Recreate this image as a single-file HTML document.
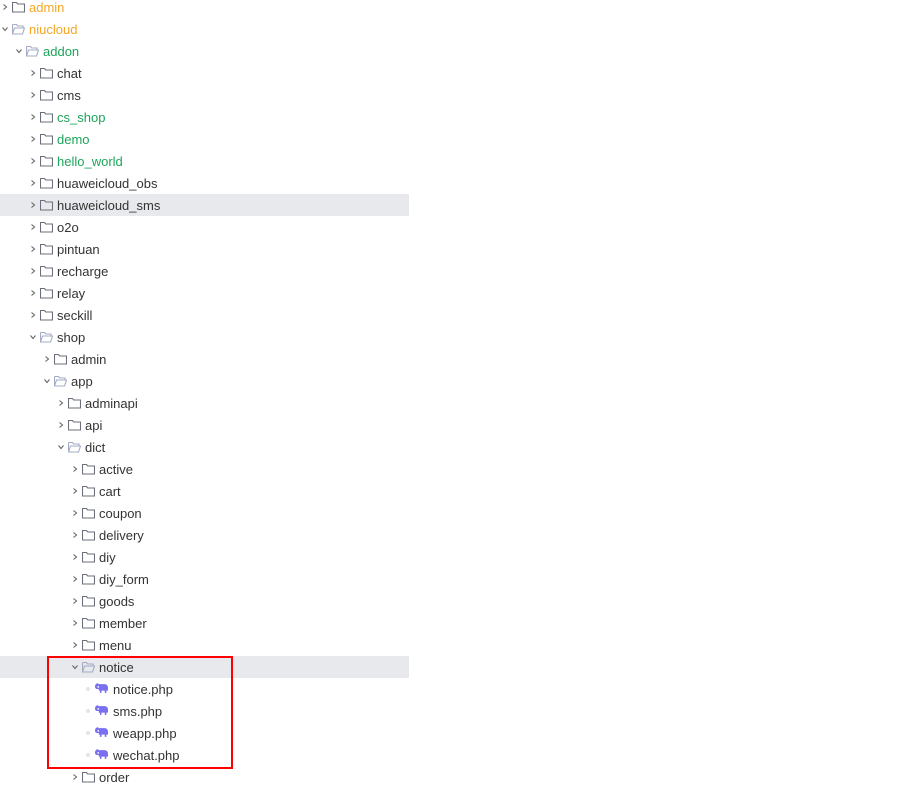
<!DOCTYPE html>
<html><head><meta charset="utf-8"><style>
body{margin:0;width:899px;height:789px;background:#fff;position:relative;overflow:hidden;font-family:"Liberation Sans",sans-serif;font-size:13px;color:#333}
.r{position:absolute;left:0;height:22px;width:409px}
.hl{background:#e8e9ec}
.c{position:absolute;top:0;height:22px;line-height:22px;left:calc(var(--l)*14px + 1px);width:8px;text-align:center}
.c svg{position:absolute;left:0;top:7px}
.f{position:absolute;top:5px;left:calc(var(--l)*14px + 12px)}
.t{position:absolute;top:1px;line-height:22px;left:calc(var(--l)*14px + 29px);white-space:nowrap}
.o{color:#f5a623}.g{color:#1ea55a}
.d{position:absolute;top:9px;left:calc(var(--l)*14px + 2px);width:4px;height:4px;border-radius:2px;background:#e4e4e8}
</style></head><body>
<svg width="0" height="0" style="position:absolute">
<defs>
<symbol id="cr" viewBox="0 0 8 8"><path d="M2.5 1.5L5.5 4L2.5 6.5" fill="none" stroke="#666" stroke-width="1.1"/></symbol>
<symbol id="cd" viewBox="0 0 8 8"><path d="M1.5 2.5L4 5.5L6.5 2.5" fill="none" stroke="#666" stroke-width="1.1"/></symbol>
<symbol id="fc" viewBox="0 0 13 12"><path d="M0.5 1.5h4l1.2 1.5h6.8v8h-12z" fill="none" stroke="#6b6f7a" stroke-width="1.1"/></symbol>
<symbol id="fo" viewBox="0 0 13 12"><path d="M0.5 1.5h4l1.2 1.5h5.3v2M0.5 1.5v9.5h10l2-6h-10l-2 6" fill="none" stroke="#a4abc4" stroke-width="1.1"/></symbol>
<symbol id="el" viewBox="0 0 12 10"><path d="M3 1h6a3 3 0 0 1 3 3v3h-1.5v2h-1.5v-2h-3v2h-1.5v-2h-1v-1.5h-1.5a2 2 0 0 1-2-2v-0.5a3 3 0 0 1 3-3z" fill="#7a6ff0"/><circle cx="3" cy="3.5" r="0.8" fill="#fff"/></symbol>
</defs></svg>

<div class="r" style="top:-4px;--l:0"><span class="c"><svg width="8" height="8"><use href="#cr"/></svg></span><svg class="f" width="13" height="12"><use href="#fc"/></svg><span class="t o">admin</span></div>
<div class="r" style="top:18px;--l:0"><span class="c"><svg width="8" height="8"><use href="#cd"/></svg></span><svg class="f" width="13" height="12"><use href="#fo"/></svg><span class="t o">niucloud</span></div>
<div class="r" style="top:40px;--l:1"><span class="c"><svg width="8" height="8"><use href="#cd"/></svg></span><svg class="f" width="13" height="12"><use href="#fo"/></svg><span class="t g">addon</span></div>
<div class="r" style="top:62px;--l:2"><span class="c"><svg width="8" height="8"><use href="#cr"/></svg></span><svg class="f" width="13" height="12"><use href="#fc"/></svg><span class="t">chat</span></div>
<div class="r" style="top:84px;--l:2"><span class="c"><svg width="8" height="8"><use href="#cr"/></svg></span><svg class="f" width="13" height="12"><use href="#fc"/></svg><span class="t">cms</span></div>
<div class="r" style="top:106px;--l:2"><span class="c"><svg width="8" height="8"><use href="#cr"/></svg></span><svg class="f" width="13" height="12"><use href="#fc"/></svg><span class="t g">cs_shop</span></div>
<div class="r" style="top:128px;--l:2"><span class="c"><svg width="8" height="8"><use href="#cr"/></svg></span><svg class="f" width="13" height="12"><use href="#fc"/></svg><span class="t g">demo</span></div>
<div class="r" style="top:150px;--l:2"><span class="c"><svg width="8" height="8"><use href="#cr"/></svg></span><svg class="f" width="13" height="12"><use href="#fc"/></svg><span class="t g">hello_world</span></div>
<div class="r" style="top:172px;--l:2"><span class="c"><svg width="8" height="8"><use href="#cr"/></svg></span><svg class="f" width="13" height="12"><use href="#fc"/></svg><span class="t">huaweicloud_obs</span></div>
<div class="r hl" style="top:194px;--l:2"><span class="c"><svg width="8" height="8"><use href="#cr"/></svg></span><svg class="f" width="13" height="12"><use href="#fc"/></svg><span class="t">huaweicloud_sms</span></div>
<div class="r" style="top:216px;--l:2"><span class="c"><svg width="8" height="8"><use href="#cr"/></svg></span><svg class="f" width="13" height="12"><use href="#fc"/></svg><span class="t">o2o</span></div>
<div class="r" style="top:238px;--l:2"><span class="c"><svg width="8" height="8"><use href="#cr"/></svg></span><svg class="f" width="13" height="12"><use href="#fc"/></svg><span class="t">pintuan</span></div>
<div class="r" style="top:260px;--l:2"><span class="c"><svg width="8" height="8"><use href="#cr"/></svg></span><svg class="f" width="13" height="12"><use href="#fc"/></svg><span class="t">recharge</span></div>
<div class="r" style="top:282px;--l:2"><span class="c"><svg width="8" height="8"><use href="#cr"/></svg></span><svg class="f" width="13" height="12"><use href="#fc"/></svg><span class="t">relay</span></div>
<div class="r" style="top:304px;--l:2"><span class="c"><svg width="8" height="8"><use href="#cr"/></svg></span><svg class="f" width="13" height="12"><use href="#fc"/></svg><span class="t">seckill</span></div>
<div class="r" style="top:326px;--l:2"><span class="c"><svg width="8" height="8"><use href="#cd"/></svg></span><svg class="f" width="13" height="12"><use href="#fo"/></svg><span class="t">shop</span></div>
<div class="r" style="top:348px;--l:3"><span class="c"><svg width="8" height="8"><use href="#cr"/></svg></span><svg class="f" width="13" height="12"><use href="#fc"/></svg><span class="t">admin</span></div>
<div class="r" style="top:370px;--l:3"><span class="c"><svg width="8" height="8"><use href="#cd"/></svg></span><svg class="f" width="13" height="12"><use href="#fo"/></svg><span class="t">app</span></div>
<div class="r" style="top:392px;--l:4"><span class="c"><svg width="8" height="8"><use href="#cr"/></svg></span><svg class="f" width="13" height="12"><use href="#fc"/></svg><span class="t">adminapi</span></div>
<div class="r" style="top:414px;--l:4"><span class="c"><svg width="8" height="8"><use href="#cr"/></svg></span><svg class="f" width="13" height="12"><use href="#fc"/></svg><span class="t">api</span></div>
<div class="r" style="top:436px;--l:4"><span class="c"><svg width="8" height="8"><use href="#cd"/></svg></span><svg class="f" width="13" height="12"><use href="#fo"/></svg><span class="t">dict</span></div>
<div class="r" style="top:458px;--l:5"><span class="c"><svg width="8" height="8"><use href="#cr"/></svg></span><svg class="f" width="13" height="12"><use href="#fc"/></svg><span class="t">active</span></div>
<div class="r" style="top:480px;--l:5"><span class="c"><svg width="8" height="8"><use href="#cr"/></svg></span><svg class="f" width="13" height="12"><use href="#fc"/></svg><span class="t">cart</span></div>
<div class="r" style="top:502px;--l:5"><span class="c"><svg width="8" height="8"><use href="#cr"/></svg></span><svg class="f" width="13" height="12"><use href="#fc"/></svg><span class="t">coupon</span></div>
<div class="r" style="top:524px;--l:5"><span class="c"><svg width="8" height="8"><use href="#cr"/></svg></span><svg class="f" width="13" height="12"><use href="#fc"/></svg><span class="t">delivery</span></div>
<div class="r" style="top:546px;--l:5"><span class="c"><svg width="8" height="8"><use href="#cr"/></svg></span><svg class="f" width="13" height="12"><use href="#fc"/></svg><span class="t">diy</span></div>
<div class="r" style="top:568px;--l:5"><span class="c"><svg width="8" height="8"><use href="#cr"/></svg></span><svg class="f" width="13" height="12"><use href="#fc"/></svg><span class="t">diy_form</span></div>
<div class="r" style="top:590px;--l:5"><span class="c"><svg width="8" height="8"><use href="#cr"/></svg></span><svg class="f" width="13" height="12"><use href="#fc"/></svg><span class="t">goods</span></div>
<div class="r" style="top:612px;--l:5"><span class="c"><svg width="8" height="8"><use href="#cr"/></svg></span><svg class="f" width="13" height="12"><use href="#fc"/></svg><span class="t">member</span></div>
<div class="r" style="top:634px;--l:5"><span class="c"><svg width="8" height="8"><use href="#cr"/></svg></span><svg class="f" width="13" height="12"><use href="#fc"/></svg><span class="t">menu</span></div>
<div class="r hl" style="top:656px;--l:5"><span class="c"><svg width="8" height="8"><use href="#cd"/></svg></span><svg class="f" width="13" height="12"><use href="#fo"/></svg><span class="t">notice</span></div>
<div class="r" style="top:678px;--l:6"><span class="d"></span><svg class="f" style="top:5px;left:95px" width="13" height="11"><use href="#el"/></svg><span class="t">notice.php</span></div>
<div class="r" style="top:700px;--l:6"><span class="d"></span><svg class="f" style="top:5px;left:95px" width="13" height="11"><use href="#el"/></svg><span class="t">sms.php</span></div>
<div class="r" style="top:722px;--l:6"><span class="d"></span><svg class="f" style="top:5px;left:95px" width="13" height="11"><use href="#el"/></svg><span class="t">weapp.php</span></div>
<div class="r" style="top:744px;--l:6"><span class="d"></span><svg class="f" style="top:5px;left:95px" width="13" height="11"><use href="#el"/></svg><span class="t">wechat.php</span></div>
<div class="r" style="top:766px;--l:5"><span class="c"><svg width="8" height="8"><use href="#cr"/></svg></span><svg class="f" width="13" height="12"><use href="#fc"/></svg><span class="t">order</span></div>
<div style="position:absolute;left:47px;top:656px;width:182px;height:109px;border:2px solid #f00"></div>
</body></html>
